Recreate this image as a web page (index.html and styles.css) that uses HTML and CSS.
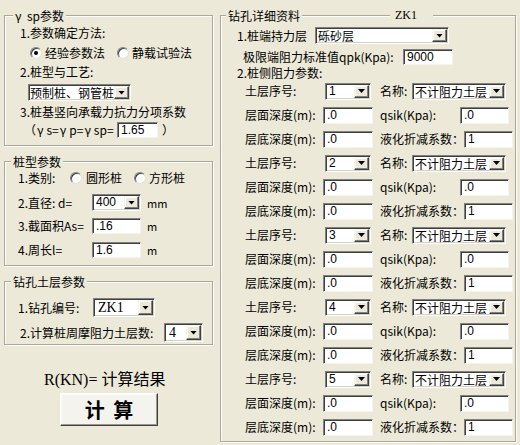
FILE: index.html
```html
<!DOCTYPE html>
<html lang="zh-CN">
<head>
<meta charset="utf-8">
<title>桩基计算</title>
<link rel="stylesheet" href="styles.css">
</head>
<body>
<div class="window">
  <div class="left">
    <div class="group g1">
      <div class="legend"><span class="lg ml8"><span class="gam">γ</span>sp参数</span></div>
      <div class="row h20 pl15">1.参数确定方法:</div>
      <div class="row h20 pl25"><span class="radio on"></span><span class="rt">经验参数法</span><span class="radio ml12"></span><span class="rt">静载试验法</span></div>
      <div class="row h18 pl15">2.桩型与工艺:</div>
      <div class="row h22 pl23 top3"><div class="combo w103"><span class="ctext tight">预制桩、钢管桩</span><span class="cbtn"></span></div></div>
      <div class="row h18 pl15">3.桩基竖向承载力抗力分项系数</div>
      <div class="row h17 pl19"><span class="lbl w93">（<span class="gm">γ</span>s=<span class="gm">γ</span>p=<span class="gm">γ</span>sp=</span><span class="field w41 h16">1.65</span><span class="paren">）</span></div>
    </div>

    <div class="group g2">
      <div class="legend"><span class="lg ml6">桩型参数</span></div>
      <div class="row h17 pl13"><span class="lbl w52">1.类别:</span><span class="radio"></span><span class="rt4">圆形桩</span><span class="radio ml12"></span><span class="rt">方形桩</span></div>
      <div class="row h17 pl13 mt8"><span class="lbl w74">2.直径: d=</span><div class="combo w49"><span class="ctext num">400</span><span class="cbtn"></span></div><span class="unit">mm</span></div>
      <div class="row h16 pl13 mt7"><span class="lbl w74">3.截面积As=</span><span class="field w49 h16">.16</span><span class="unit">m</span></div>
      <div class="row h16 pl13 mt8"><span class="lbl w74">4.周长l=</span><span class="field w49 h16">1.6</span><span class="unit">m</span></div>
    </div>

    <div class="group g3">
      <div class="legend"><span class="lg ml6">钻孔土层参数</span></div>
      <div class="row h19 pl13 mt9"><span class="lbl w75">1.钻孔编号:</span><div class="combo w62 tall"><span class="ctext serif">ZK1</span><span class="cbtn"></span></div></div>
      <div class="row h19 pl15 mt6"><span class="lbl w144">2.计算桩周摩阻力土层数:</span><div class="combo w39 tall"><span class="ctext serif">4</span><span class="cbtn"></span></div></div>
    </div>

    <div class="result">R(KN)= 计算结果</div>
    <button class="calc" type="button">计 算</button>
  </div>

  <div class="group right">
    <div class="legend"><span class="lg ml5 w76">钻孔详细资料</span><span class="lg zk">ZK1</span></div>
    <div class="row h17 pl16 mt4"><span class="lbl w78">1.桩端持力层</span><div class="combo w134"><span class="ctext">砾砂层</span><span class="cbtn"></span></div></div>
    <div class="row h16 pl22 mt5"><span class="lbl w160 lh12">极限端阻力标准值qpk(Kpa):</span><span class="field w50 h16">9000</span></div>
    <div class="row h12 pl16 mt2 sub">2.桩侧阻力参数:</div>

    <div class="row layer"><span class="l1">土层序号:</span><span class="cell"><span class="combo w46"><span class="ctext num">1</span><span class="cbtn"></span></span></span><span class="l2 name">名称:</span><span class="combo w94"><span class="ctext">不计阻力土层</span><span class="cbtn"></span></span></div>
    <div class="row layer"><span class="l1">层面深度(m):</span><span class="field w50">.0</span><span class="l2">qsik(Kpa):</span><span class="field w49">.0</span></div>
    <div class="row layer"><span class="l1">层底深度(m):</span><span class="field w50">.0</span><span class="l2">液化折减系数：</span><span class="field w49">1</span></div>

    <div class="row layer"><span class="l1">土层序号:</span><span class="cell"><span class="combo w46"><span class="ctext num">2</span><span class="cbtn"></span></span></span><span class="l2 name">名称:</span><span class="combo w94"><span class="ctext">不计阻力土层</span><span class="cbtn"></span></span></div>
    <div class="row layer"><span class="l1">层面深度(m):</span><span class="field w50">.0</span><span class="l2">qsik(Kpa):</span><span class="field w49">.0</span></div>
    <div class="row layer"><span class="l1">层底深度(m):</span><span class="field w50">.0</span><span class="l2">液化折减系数：</span><span class="field w49">1</span></div>

    <div class="row layer"><span class="l1">土层序号:</span><span class="cell"><span class="combo w46"><span class="ctext num">3</span><span class="cbtn"></span></span></span><span class="l2 name">名称:</span><span class="combo w94"><span class="ctext">不计阻力土层</span><span class="cbtn"></span></span></div>
    <div class="row layer"><span class="l1">层面深度(m):</span><span class="field w50">.0</span><span class="l2">qsik(Kpa):</span><span class="field w49">.0</span></div>
    <div class="row layer"><span class="l1">层底深度(m):</span><span class="field w50">.0</span><span class="l2">液化折减系数：</span><span class="field w49">1</span></div>

    <div class="row layer"><span class="l1">土层序号:</span><span class="cell"><span class="combo w46"><span class="ctext num">4</span><span class="cbtn"></span></span></span><span class="l2 name">名称:</span><span class="combo w94"><span class="ctext">不计阻力土层</span><span class="cbtn"></span></span></div>
    <div class="row layer"><span class="l1">层面深度(m):</span><span class="field w50">.0</span><span class="l2">qsik(Kpa):</span><span class="field w49">.0</span></div>
    <div class="row layer"><span class="l1">层底深度(m):</span><span class="field w50">.0</span><span class="l2">液化折减系数：</span><span class="field w49">1</span></div>

    <div class="row layer"><span class="l1">土层序号:</span><span class="cell"><span class="combo w46"><span class="ctext num">5</span><span class="cbtn"></span></span></span><span class="l2 name">名称:</span><span class="combo w94"><span class="ctext">不计阻力土层</span><span class="cbtn"></span></span></div>
    <div class="row layer"><span class="l1">层面深度(m):</span><span class="field w50">.0</span><span class="l2">qsik(Kpa):</span><span class="field w49">.0</span></div>
    <div class="row layer"><span class="l1">层底深度(m):</span><span class="field w50">.0</span><span class="l2">液化折减系数：</span><span class="field w49">1</span></div>
  </div>
</div>
</body>
</html>
```

FILE: styles.css
```css
* { box-sizing: border-box; }
html, body { margin: 0; padding: 0; }
body {
  width: 520px;
  height: 445px;
  overflow: hidden;
  background: #ECE9D8;
  color: #000;
  font: 12px/14px "Noto Sans CJK SC", sans-serif;
}
.window { display: flex; gap: 7px; padding: 15px 0 0 4px; }
.left { width: 209px; display: flex; flex-direction: column; flex-shrink: 0; }

.group {
  border: 1px solid #aca899;
  box-shadow: 1px 1px 0 #fff, inset 1px 1px 0 #fff;
  display: flex;
  flex-direction: column;
}
.g1 { height: 131px; }
.g2 { height: 105px; margin-top: 15px; }
.g3 { height: 64px; margin-top: 15px; }
.right { width: 296px; height: 427px; flex-shrink: 0; }

.legend { display: flex; height: 15px; margin-top: -8px; line-height: 15px; flex-shrink: 0; }
.lg { background: #ECE9D8; padding: 0 2px; white-space: nowrap; }
.ml5 { margin-left: 5px; }
.ml6 { margin-left: 6px; }
.ml8 { margin-left: 8px; }
.w76 { width: 76px; }
.zk { margin-left: 88px; width: 43px; padding-left: 5px; font: 12px/15px "Liberation Serif", serif; }
.gam { display: inline-block; width: 12px; }
.gm { margin: 0 3px 0 1px; }

.row { display: flex; align-items: center; white-space: nowrap; flex-shrink: 0; }
.h12 { height: 12px; line-height: 12px; }
.h16 { height: 16px; }
.h17 { height: 17px; }
.h18 { height: 18px; }
.h19 { height: 19px; }
.h20 { height: 20px; }
.h22 { height: 22px; }
.lh12 { line-height: 12px; }
.top3 { align-items: flex-start; padding-top: 3px; }
.pl13 { padding-left: 13px; }
.pl15 { padding-left: 15px; }
.pl16 { padding-left: 16px; }
.pl19 { padding-left: 19px; }
.pl22 { padding-left: 22px; }
.pl23 { padding-left: 23px; }
.pl25 { padding-left: 25px; }
.mt2 { margin-top: 2px; }
.mt4 { margin-top: 4px; }
.mt5 { margin-top: 5px; }
.mt6 { margin-top: 6px; }
.mt7 { margin-top: 7px; }
.mt8 { margin-top: 8px; }
.mt9 { margin-top: 9px; }
.ml12 { margin-left: 12px; }

.lbl { flex: 0 0 auto; }
.w52 { width: 52px; }
.w74 { width: 74px; }
.w75 { width: 75px; }
.w78 { width: 78px; }
.w93 { width: 93px; }
.w144 { width: 144px; }
.w160 { width: 160px; }

.radio {
  width: 12px; height: 12px; flex-shrink: 0;
  border-radius: 50%;
  background: #fff;
  border: 1px solid;
  border-color: #808080 #e4e2d8 #e4e2d8 #808080;
  box-shadow: inset 1px 1px 0 #404040;
  display: flex; align-items: center; justify-content: center;
}
.radio.on::after { content: ""; width: 4px; height: 4px; border-radius: 50%; background: #000; }
.rt { margin-left: 3px; }
.rt4 { margin-left: 4px; }

.combo {
  display: flex;
  flex-shrink: 0;
  height: 17px;
  padding: 1px;
  background: #fff;
  border: 1px solid;
  border-color: #808080 #fff #fff #808080;
  box-shadow: inset 1px 1px 0 #404040, inset -1px -1px 0 #d4d0c8;
}
.combo.tall { height: 19px; }
.w39 { width: 39px; }
.w41 { width: 41px; }
.w46 { width: 46px; }
.w49 { width: 49px; }
.w50 { width: 50px; }
.w62 { width: 62px; }
.w94 { width: 94px; }
.w103 { width: 103px; }
.w134 { width: 134px; }
.ctext { flex: 1; min-width: 0; padding-left: 1px; line-height: 13px; white-space: nowrap; }
.ctext.tight { padding-left: 0; }
.tall .ctext { line-height: 15px; }
.ctext.num { font: 12px/13px "Liberation Sans", sans-serif; padding-left: 2px; }
.ctext.serif { font: 14px/15px "Liberation Serif", serif; padding-left: 3px; }
.cbtn {
  width: 15px; height: 100%; flex-shrink: 0;
  background: #ECE9D8;
  border: 1px solid;
  border-color: #f4f3ee #404040 #404040 #f4f3ee;
  box-shadow: inset -1px -1px 0 #808080, inset 1px 1px 0 #fff;
  display: flex; align-items: center; justify-content: center;
}
.cbtn::after {
  content: "";
  width: 7px; height: 4px;
  background: #000;
  clip-path: polygon(0 0, 100% 0, 50% 100%);
}

.field {
  flex-shrink: 0;
  height: 17px;
  padding-left: 3px;
  background: #fff;
  border: 1px solid;
  border-color: #808080 #f4f3ee #f4f3ee #808080;
  box-shadow: inset 1px 1px 0 #404040;
  font: 12px/15px "Liberation Sans", sans-serif;
}
.field.h16 { height: 16px; line-height: 14px; }
.paren { margin-left: 4px; }
.unit { margin-left: 6px; font-size: 11px; }

.layer { height: 24px; padding-left: 24px; }
.l1 { flex: 0 0 78px; }
.cell { flex: 0 0 50px; display: flex; justify-content: center; }
.l2 { flex: 0 0 80px; margin-left: 7px; }
.l2.name { flex-basis: 32px; }

.result {
  margin-top: 25px;
  height: 20px;
  line-height: 20px;
  padding-left: 40px;
  font-size: 16px;
  font-family: "Liberation Serif", "Noto Sans CJK SC", serif;
  white-space: nowrap;
}
.calc {
  margin: 3px 0 0 56px;
  width: 98px;
  height: 33px;
  padding: 0;
  background: #f4f3ee;
  border: 1px solid;
  border-color: #fff #404040 #404040 #fff;
  box-shadow: inset -1px -1px 0 #9d9a8c, inset 1px 1px 0 #fbfbf8;
  font: bold 20px/30px "Noto Sans CJK SC", sans-serif;
  word-spacing: 4px;
  color: #000;
}
```
